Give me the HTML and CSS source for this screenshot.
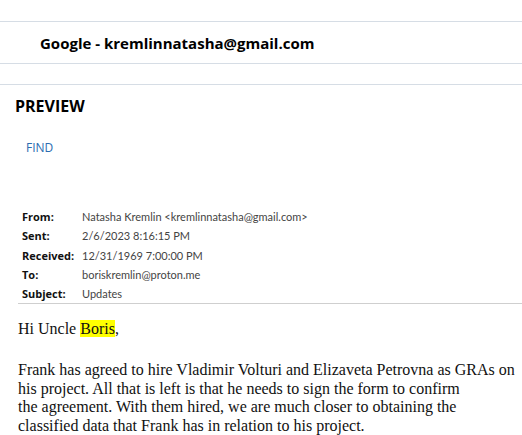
FILE: index.html
```html
<!DOCTYPE html>
<html>
<head>
<meta charset="utf-8">
<link rel="stylesheet" href="styles.css">
</head>
<body>
<div class="top-gap"></div>
<div class="account">Google - kremlinnatasha@gmail.com</div>
<div class="spacer"></div>
<div class="preview">
  <h2 class="title">PREVIEW</h2>
  <div class="find">FIND</div>
</div>
<table class="headers">
  <tr><td class="lbl">From:</td><td class="val">Natasha Kremlin &lt;kremlinnatasha@gmail.com&gt;</td></tr>
  <tr><td class="lbl">Sent:</td><td class="val">2/6/2023 8:16:15 PM</td></tr>
  <tr><td class="lbl">Received:</td><td class="val">12/31/1969 7:00:00 PM</td></tr>
  <tr><td class="lbl">To:</td><td class="val">boriskremlin@proton.me</td></tr>
  <tr><td class="lbl">Subject:</td><td class="val">Updates</td></tr>
</table>
<div class="sep"></div>
<div class="body">
  <p>Hi Uncle <span class="hl">Boris</span>,</p>
  <p>Frank has agreed to hire Vladimir Volturi and Elizaveta Petrovna as GRAs on his project. All that is left is that he needs to sign the form to confirm<br>the agreement. With them hired, we are much closer to obtaining the<br>classified data that Frank has in relation to his project.</p>
</div>
</body>
</html>
```
FILE: styles.css
```css
html, body {
  margin: 0;
  padding: 0;
  background: #ffffff;
  overflow: hidden;
}
body {
  width: 522px;
  height: 435px;
  font-family: "Open Sans", "Noto Sans", sans-serif;
  color: #000;
}
.top-gap {
  height: 21px;
  border-bottom: 1px solid #d6dde5;
}
.account {
  height: 41px;
  display: flex;
  align-items: center;
  padding-left: 40px;
  font-size: 15px;
  font-weight: 700;
  border-bottom: 1px solid #d6dde5;
}
.spacer {
  height: 20px;
  border-bottom: 1px solid #d6dde5;
}
.preview {
  padding: 11px 0 0 15px;
}
.title {
  margin: 0;
  font-size: 16px;
  font-weight: 700;
  line-height: 20px;
}
.find {
  margin: 24px 0 0 11px;
  font-size: 12px;
  color: #2b6cb0;
  line-height: 16px;
}
.headers {
  margin: 51px 0 0 19px;
  border-collapse: collapse;
  font-size: 11px;
}
.headers td {
  padding: 0 3px;
  height: 19.25px;
  line-height: 19.25px;
}
.lbl {
  font-weight: 700;
  width: 54px;
  color: #111;
}
.val {
  font-family: "Lato", "Noto Sans", sans-serif;
  color: #444;
}
.sep {
  margin: 0 0 0 18px;
  border-bottom: 1px solid #cfcfcf;
}
.body {
  padding: 0 0 0 18px;
  font-family: "Liberation Serif", serif;
  font-size: 16px;
  line-height: 18.7px;
  color: #111;
}
.body p {
  margin: 16px 0 0 0;
}
.body p + p {
  margin-top: 22px;
}
.hl {
  background: #ffff00;
}
```
